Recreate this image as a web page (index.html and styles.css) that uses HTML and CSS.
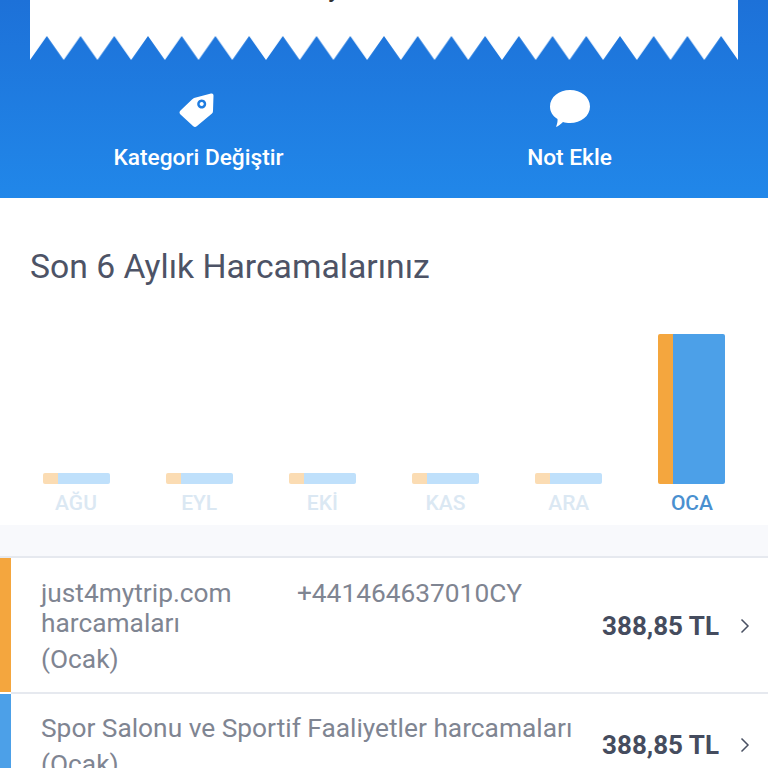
FILE: index.html
```html
<!DOCTYPE html>
<html lang="tr">
<head>
    <meta charset="UTF-8">
    <meta name="viewport" content="width=device-width, initial-scale=1.0">
    <title>Harcama Detayı</title>
    <link rel="stylesheet" href="styles.css">
</head>
<body>
    <header class="hero">
        <div class="receipt">
            <div class="receipt-body"><span class="receipt-cut">Aylık Ödeme</span></div>
            <svg class="receipt-edge" viewBox="0 0 708 25">
                <defs>
                    <pattern id="teeth" width="33.714" height="25" patternUnits="userSpaceOnUse">
                        <polygon fill="#fff" points="0,0 33.714,0 33.714,24 16.857,0 0,24"/>
                    </pattern>
                </defs>
                <rect width="708" height="25" fill="url(#teeth)"/>
            </svg>
        </div>
        <div class="actions">
            <a class="action">
                <svg class="action-icon tag-icon" viewBox="0 0 36 36">
                    <path fill="#fff" fill-rule="evenodd" d="M15 5 L32 0.500 Q34.500 0 34.500 2.500 L34 18 Q34 19.500 33 20.500 L18 33 Q16 35 14 33 L1.500 21.500 Q-0.500 19.500 1.500 17.500 L13 6.500 Q14 5.500 15 5 Z M22.700 6.500 a4.500 4.500 0 1 0 0.010 0 Z M22.700 9 a2 2 0 1 1 -0.010 0 Z"/>
                </svg>
                <span>Kategori Değiştir</span>
            </a>
            <a class="action">
                <svg class="action-icon bubble-icon" viewBox="0 0 42 40">
                    <path fill="#fff" d="M21 1 C32 1 41 8 41 17.500 C41 27 32 34 21 34 C18.500 34 16 33.600 14 33 C12 35 9 37.500 7 38 C8 35.500 8.800 32.500 8.500 30 C3.500 27 1 22.500 1 17.500 C1 8 10 1 21 1 Z"/>
                </svg>
                <span>Not Ekle</span>
            </a>
        </div>
    </header>

    <section class="chart-section">
        <h2 class="chart-title">Son 6 Aylık Harcamalarınız</h2>
        <div class="chart">
            <div class="month dim"><div class="bar small"><i class="part-a"></i><i class="part-b"></i></div><span>AĞU</span></div>
            <div class="month dim"><div class="bar small"><i class="part-a"></i><i class="part-b"></i></div><span>EYL</span></div>
            <div class="month dim"><div class="bar small"><i class="part-a"></i><i class="part-b"></i></div><span>EKİ</span></div>
            <div class="month dim"><div class="bar small"><i class="part-a"></i><i class="part-b"></i></div><span>KAS</span></div>
            <div class="month dim"><div class="bar small"><i class="part-a"></i><i class="part-b"></i></div><span>ARA</span></div>
            <div class="month"><div class="bar full"><i class="part-a"></i><i class="part-b"></i></div><span>OCA</span></div>
        </div>
    </section>

    <div class="spacer"></div>

    <ul class="list">
        <li class="row row-orange">
            <div class="row-bar"></div>
            <div class="row-main">
                <p class="row-text">just4mytrip.com&nbsp;&nbsp;&nbsp;&nbsp;&nbsp;&nbsp;&nbsp;&nbsp;&nbsp;&nbsp;+441464637010CY harcamaları<br><span class="row-month">(Ocak)</span></p>
                <strong class="row-amount">388,85 TL</strong>
                <svg class="chevron" width="10" height="16" viewBox="0 0 10 16"><path d="M1.500 1.500 L8 8 L1.500 14.500" fill="none" stroke="#4a5163" stroke-width="1.500"/></svg>
            </div>
        </li>
        <li class="row row-blue">
            <div class="row-bar"></div>
            <div class="row-main">
                <p class="row-text">Spor Salonu ve Sportif Faaliyetler harcamaları<br><span class="row-month">(Ocak)</span></p>
                <strong class="row-amount">388,85 TL</strong>
                <svg class="chevron" width="10" height="16" viewBox="0 0 10 16"><path d="M1.500 1.500 L8 8 L1.500 14.500" fill="none" stroke="#4a5163" stroke-width="1.500"/></svg>
            </div>
        </li>
    </ul>
</body>
</html>
```

FILE: styles.css
```css
html, body {
    margin: 0;
    height: 768px;
    overflow: hidden;
}
body {
    background-color: #fff;
    font-family: Roboto, "Liberation Sans", sans-serif;
    color: #454c5e;
}
.hero {
    height: 198px;
    background: linear-gradient(#1d71d8, #2187e9);
    padding: 0 30px;
    box-sizing: border-box;
}
.receipt-body {
    height: 36px;
    background-color: #fff;
    overflow: hidden;
    text-align: center;
}
.receipt-cut {
    display: block;
    margin-top: -25px;
    font-size: 26px;
    line-height: 26px;
    color: #333;
}
.receipt-edge {
    display: block;
    width: 708px;
    height: 25px;
}
.actions {
    display: flex;
    margin: 28px -30px 0;
    padding: 0 13px;
}
.action {
    flex: 1;
    display: flex;
    flex-direction: column;
    align-items: center;
    color: #fff;
    font-size: 22.7px;
    line-height: 26px;
    font-weight: 500;
}
.action-icon {
    margin-bottom: 16px;
}
.tag-icon {
    width: 36px;
    height: 36px;
    margin-top: 4px;
    margin-right: 3px;
}
.bubble-icon {
    width: 42px;
    height: 40px;
}
.chart-section {
    padding: 0 30px 10px;
}
.chart-title {
    margin: 0;
    padding-top: 48px;
    font-size: 33.7px;
    line-height: 42px;
    font-weight: 400;
    color: #4d5366;
}
.chart {
    display: flex;
    justify-content: space-between;
    align-items: flex-end;
    height: 208px;
    margin-top: 19px;
}
.month {
    width: 92px;
    display: flex;
    flex-direction: column;
    align-items: center;
    font-size: 21px;
    font-weight: 500;
    color: #4a90d0;
}
.month span {
    line-height: 24px;
    margin-top: 7px;
}
.month.dim span {
    color: #dbe8f3;
}
.bar {
    display: flex;
    width: 67px;
    border-radius: 2px;
    overflow: hidden;
}
.bar.small {
    height: 11px;
}
.bar.full {
    height: 150px;
}
.part-a {
    width: 15px;
    background-color: #f4a63e;
}
.part-b {
    flex: 1;
    background-color: #4ca0e8;
}
.dim .part-a {
    background-color: #fbdcb3;
}
.dim .part-b {
    background-color: #bfe0fb;
}
.spacer {
    height: 31px;
    background-color: #f8f9fc;
}
.list {
    margin: 0;
    padding: 0;
    list-style: none;
    border-top: 2px solid #e6e9ef;
}
.row {
    display: flex;
}
.row-bar {
    width: 11px;
    flex-shrink: 0;
    margin-bottom: 2px;
    background-color: #f4a63e;
}
.row-blue .row-bar {
    background-color: #4ca0e8;
}
.row-main {
    flex: 1;
    display: flex;
    align-items: center;
    height: 132px;
    padding: 2px 18px 0 30px;
    border-bottom: 2px solid #e6e9ef;
}
.row-blue .row-main {
    height: 104px;
    padding-top: 0;
    border-bottom: none;
}
.row-blue .row-amount,
.row-blue .chevron {
    margin-bottom: 2px;
}
.row-text {
    flex: 1;
    margin: 0;
    font-size: 26.3px;
    line-height: 30px;
    color: #7f8592;
}
.row-month {
    display: inline-block;
    margin-top: 6px;
}
.row-amount {
    font-size: 26px;
    font-weight: 700;
    margin-right: 21px;
    white-space: nowrap;
}
```
